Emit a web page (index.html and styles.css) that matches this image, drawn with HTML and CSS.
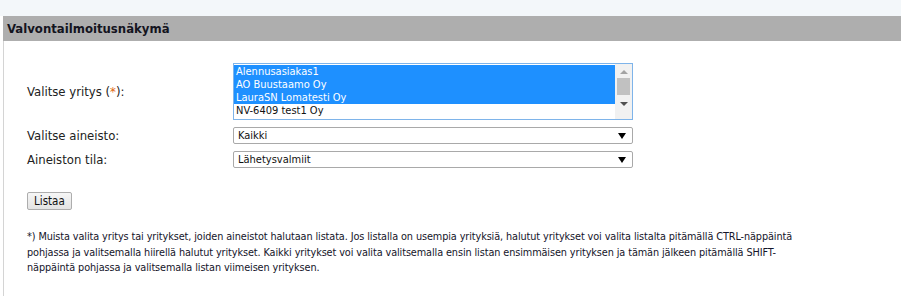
FILE: index.html
```
<!DOCTYPE html>
<html lang="fi">

<head>
    <meta charset="UTF-8">
    <meta name="viewport" content="width=device-width, initial-scale=1.0">
    <title>Valvontailmoitusnäkymä</title>
    <link rel="stylesheet" href="styles.css">
</head>

<body>
    <div class="topband"></div>
    <div class="panel">
        <h1 class="panel-title">Valvontailmoitusnäkymä</h1>
        <div class="panel-body">
            <form class="filter-form">
                <label class="field-label">Valitse yritys (<span class="req">*</span>):</label>
                <div class="listbox">
                    <div class="listbox-items">
                        <div class="listbox-item selected">Alennusasiakas1</div>
                        <div class="listbox-item selected">AO Buustaamo Oy</div>
                        <div class="listbox-item selected">LauraSN Lomatesti Oy</div>
                        <div class="listbox-item">NV-6409 test1 Oy</div>
                    </div>
                    <div class="listbox-scroll">
                        <span class="arrow-up"></span>
                        <span class="thumb"></span>
                        <span class="arrow-down"></span>
                    </div>
                </div>

                <label class="field-label">Valitse aineisto:</label>
                <div class="dropdown">Kaikki</div>

                <label class="field-label">Aineiston tila:</label>
                <div class="dropdown">Lähetysvalmiit</div>
            </form>

            <button type="button" class="list-btn">Listaa</button>

            <p class="note">*) Muista valita yritys tai yritykset, joiden aineistot halutaan listata. Jos listalla on usempia yrityksiä, halutut yritykset voi valita listalta pitämällä CTRL-näppäintä pohjassa ja valitsemalla hiirellä halutut yritykset. Kaikki yritykset voi valita valitsemalla ensin listan ensimmäisen yrityksen ja tämän jälkeen pitämällä SHIFT-näppäintä pohjassa ja valitsemalla listan viimeisen yrityksen.</p>
        </div>
    </div>
</body>

</html>
```

FILE: styles.css
```
body {
    margin: 0;
    padding: 0;
    background-color: #fff;
    font-family: "DejaVu Sans Condensed", "DejaVu Sans", sans-serif;
    font-stretch: condensed;
    color: #1c1c24;
}

.topband {
    height: 16px;
    background-color: #f3f7fa;
}

.panel {
    margin-left: 3px;
    border-left: 1px solid #d4d4d4;
    min-height: 280px;
}

.panel-title {
    margin: 0 0 0 -1px;
    height: 25px;
    padding-left: 4px;
    background-color: #aeaeae;
    font-size: 13px;
    font-weight: bold;
    line-height: 26px;
    color: #14141e;
}

.panel-body {
    padding: 22px 0 0 23px;
}

.filter-form {
    display: grid;
    grid-template-columns: 206px 400px;
    row-gap: 7px;
    align-items: center;
}

.field-label {
    font-size: 13px;
    color: #222;
}

.req {
    color: #e0660f;
}

/* multi select list */
.listbox {
    display: flex;
    height: 57px;
    box-sizing: border-box;
    border: 1px solid #7eb4ea;
    background-color: #fff;
}

.listbox-items {
    flex: 1;
    padding-top: 1px;
}

.listbox-item {
    height: 13px;
    padding-left: 2px;
    font-size: 11px;
    line-height: 14px;
    color: #111;
}

.listbox-item.selected {
    background-color: #1e90ff;
    color: #fff;
}

.listbox-scroll {
    width: 17px;
    background-color: #f1f1f1;
    display: flex;
    flex-direction: column;
    align-items: center;
}

.arrow-up,
.arrow-down {
    width: 0;
    height: 0;
    border-left: 4px solid transparent;
    border-right: 4px solid transparent;
}

.arrow-up {
    margin-top: 6px;
    border-bottom: 4px solid #a3a3a3;
}

.arrow-down {
    margin-top: 7px;
    border-top: 4px solid #505050;
}

.thumb {
    width: 13px;
    height: 17px;
    margin-top: 4px;
    background-color: #c1c1c1;
}

/* single selects */
.dropdown {
    position: relative;
    height: 17px;
    box-sizing: border-box;
    border: 1px solid #a9a9a9;
    border-radius: 2px;
    padding-left: 4px;
    font-size: 11px;
    line-height: 15px;
    color: #111;
}

.dropdown::after {
    content: "";
    position: absolute;
    right: 6px;
    top: 5px;
    border-left: 4px solid transparent;
    border-right: 4px solid transparent;
    border-top: 6px solid #000;
}

.list-btn {
    margin-top: 24px;
    height: 18px;
    padding: 0 6px;
    font-family: inherit;
    font-stretch: condensed;
    font-size: 11.5px;
    color: #111;
    background: linear-gradient(#f6f6f6, #e3e3e3);
    border: 1px solid #adadad;
    border-radius: 2px;
}

.note {
    margin: 19px 0 0;
    max-width: 770px;
    font-size: 10.8px;
    letter-spacing: -0.1px;
    line-height: 15.5px;
    color: #15152a;
}
```
